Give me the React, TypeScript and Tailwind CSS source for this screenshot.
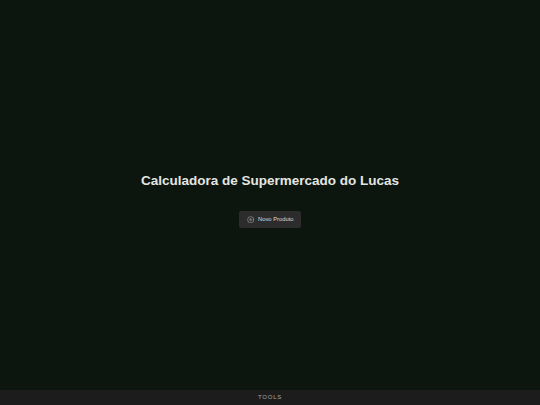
import { CirclePlus } from "lucide-react"

export default function App() {
  return (
    <div className="flex h-[405px] w-[540px] flex-col overflow-hidden bg-[#0d160e] font-['Liberation_Sans',Arial,sans-serif]">
      {/* Main content */}
      <div className="flex flex-1 flex-col items-center justify-center pt-[10px]">
        <h1 className="text-[13.5px] leading-[18px] font-bold text-[#e4e6e2]">
          Calculadora de Supermercado do Lucas
        </h1>
        <button className="mt-[21px] flex h-[17.5px] w-[62.5px] items-center justify-center gap-[4px] rounded-[2px] bg-[#2c2c2c] text-[5.8px] text-[#dcdcdc]">
          <CirclePlus size={7.5} strokeWidth={1.5} className="text-[#c0c0c0]" />
          Novo Produto
        </button>
      </div>

      {/* Bottom bar */}
      <div className="flex h-[15px] items-center justify-center bg-[#1c1c1c]">
        <span className="text-[6px] font-medium tracking-[0.75px] text-[#a8a8a8]">TOOLS</span>
      </div>
    </div>
  )
}
